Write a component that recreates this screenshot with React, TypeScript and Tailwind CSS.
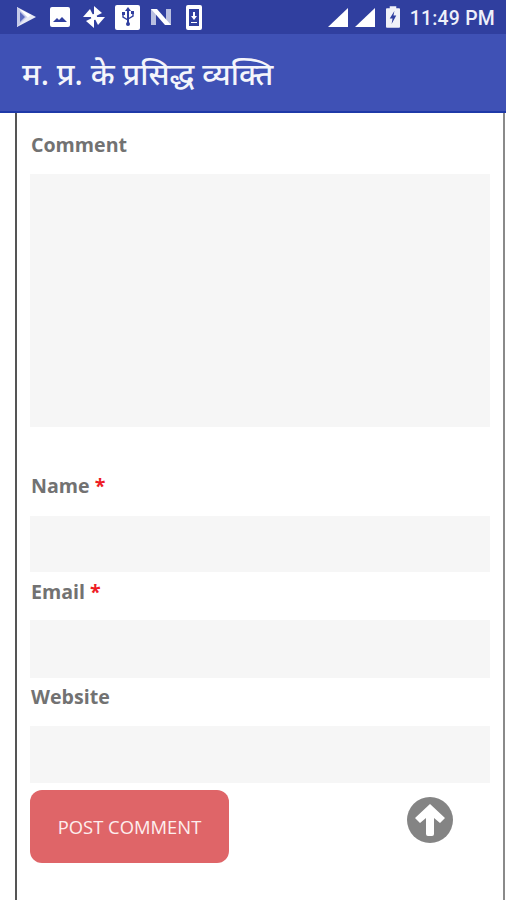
const labelClass = "ml-px block text-[19.6px] leading-[28px] font-bold text-[#727272]";
const fieldClass = "w-full bg-[#f6f6f6]";

function StatusIcons() {
  return (
    <div className="flex items-center">
      <svg width="20" height="20" viewBox="0 0 20 20" className="ml-[16px]">
        <path d="M1 0 L20 10 L1 20 Z" fill="#e8eaf6" />
        <path d="M1 0 L11 10 L1 20 Z" fill="#c5cae9" />
        <path d="M4 5 L9 10 L4 15 Z" fill="#5c6bc0" />
        <path d="M4 2.5 L15 8 L12 10.5 Z" fill="#ffffff" />
      </svg>
      <svg width="20" height="20" viewBox="0 0 20 20" className="ml-[14px]">
        <rect x="0" y="0" width="20" height="20" rx="2" fill="#ffffff" />
        <path d="M3 15 L7 11 L9 13 L12 10 L17 15 Z" fill="#303f9f" />
      </svg>
      <svg width="22" height="22" viewBox="0 0 22 22" className="ml-[13px]">
        <path d="M11 11 L11 0 L19 7 Z M11 11 L22 11 L15 19 Z M11 11 L11 22 L3 15 Z M11 11 L0 11 L7 3 Z" fill="#ffffff" />
        <circle cx="11" cy="11" r="3" fill="#ffffff" />
      </svg>
      <div className="ml-[10px] flex h-[25px] w-[25px] items-center justify-center rounded-[2px] bg-white">
        <svg width="14" height="20" viewBox="0 0 14 20">
          <path d="M7 0 L10 4 H8 V16 H6 V4 H4 Z" fill="#303f9f" />
          <rect x="5" y="15" width="4" height="4" rx="2" fill="#303f9f" />
          <rect x="1" y="5" width="3" height="3" fill="#303f9f" />
          <rect x="10" y="4" width="3" height="3" fill="#303f9f" />
          <path d="M2 8 V10 L7 13 M12 7 V9 L7 12" stroke="#303f9f" strokeWidth="1.4" fill="none" />
        </svg>
      </div>
      <svg width="22" height="18" viewBox="0 0 22 18" className="ml-[10px]">
        <path d="M1 1 H6 L6 17 H1 Z" fill="#b9bfe0" />
        <path d="M16 1 H21 V17 H16 Z" fill="#b9bfe0" />
        <path d="M1 1 H7 L21 17 H15 Z" fill="#ffffff" />
      </svg>
      <div className="ml-[14px] flex h-[25px] w-[16px] items-center justify-center rounded-[2px] bg-white">
        <svg width="10" height="17" viewBox="0 0 10 17">
          <rect x="0" y="0" width="10" height="17" fill="#303f9f" />
          <path d="M4 3 H6 V7 H8 L5 11 L2 7 H4 Z M2 13 H8 V14 H2 Z" fill="#ffffff" />
        </svg>
      </div>
    </div>
  );
}

function StatusRight() {
  return (
    <div className="flex items-center">
      <svg width="20" height="19" viewBox="0 0 20 19">
        <path d="M0 19 L20 0 V19 Z" fill="#ffffff" />
      </svg>
      <svg width="20" height="19" viewBox="0 0 20 19" className="ml-[7px]">
        <path d="M0 19 L20 0 V19 Z" fill="#ffffff" />
      </svg>
      <svg width="14" height="22" viewBox="0 0 15 23" className="ml-[11px]">
        <path d="M4 0 H11 V2 H14 A1 1 0 0 1 15 3 V22 A1 1 0 0 1 14 23 H1 A1 1 0 0 1 0 22 V3 A1 1 0 0 1 1 2 H4 Z" fill="#f0f1f8" />
        <path d="M9 5 L4 13 H7 L6 19 L11 10 H8 Z" fill="#303f9f" />
      </svg>
      <span className="mt-[3px] ml-[10px] font-['Roboto',sans-serif] text-[19.4px] leading-none font-medium tracking-[0.25px] text-[#eef0fa]">
        11:49 PM
      </span>
    </div>
  );
}

export default function App() {
  return (
    <div className="flex h-[900px] w-[506px] flex-col overflow-hidden bg-white font-['Open_Sans',sans-serif]">
      <div className="flex h-[34px] shrink-0 items-center justify-between bg-[#303f9f] pr-[11px]">
        <StatusIcons />
        <StatusRight />
      </div>
      <div className="flex h-[79px] shrink-0 items-center border-b-2 border-[#1f39a8] bg-[#3f51b5] pt-[3px] pl-[22px]">
        <h1 className="font-['Noto_Sans','Noto_Sans_Devanagari','Lohit_Devanagari',sans-serif] text-[30.4px] leading-none font-medium text-[#f4f5fb]">
          म. प्र. के प्रसिद्ध व्यक्ति
        </h1>
      </div>
      <div className="mr-px ml-[15px] flex min-h-0 flex-1 flex-col border-r-2 border-l-2 border-r-[#8a8a8a] border-l-[#555555] pt-[18px] pr-[13px] pl-[13px]">
        <label className={labelClass}>Comment</label>
        <div className={`${fieldClass} mt-[15px] h-[253px]`} />
        <label className={`${labelClass} mt-[45px]`}>
          Name <span className="text-[#ee1c25]">*</span>
        </label>
        <div className={`${fieldClass} mt-[16px] h-[56px]`} />
        <label className={`${labelClass} mt-[6px]`}>
          Email <span className="text-[#ee1c25]">*</span>
        </label>
        <div className={`${fieldClass} mt-[14px] h-[58px]`} />
        <label className={`${labelClass} mt-[5px]`}>Website</label>
        <div className={`${fieldClass} mt-[15px] h-[57px]`} />
        <div className="relative mt-[7px]">
          <button className="flex h-[73px] w-[199px] items-center justify-center rounded-[12px] bg-[#df6568] text-[18.4px] text-[#fdeeee]">
            POST COMMENT
          </button>
          <svg width="46" height="46" viewBox="0 0 46 46" className="absolute top-[7px] left-[377px]">
            <circle cx="23" cy="23" r="23" fill="#848484" />
            <path d="M23 7 L38 21 L33 26 L27 21 V37 A2 2 0 0 1 25 39 H21 A2 2 0 0 1 19 37 V21 L13 26 L8 21 Z" fill="#ffffff" />
          </svg>
        </div>
      </div>
    </div>
  );
}
